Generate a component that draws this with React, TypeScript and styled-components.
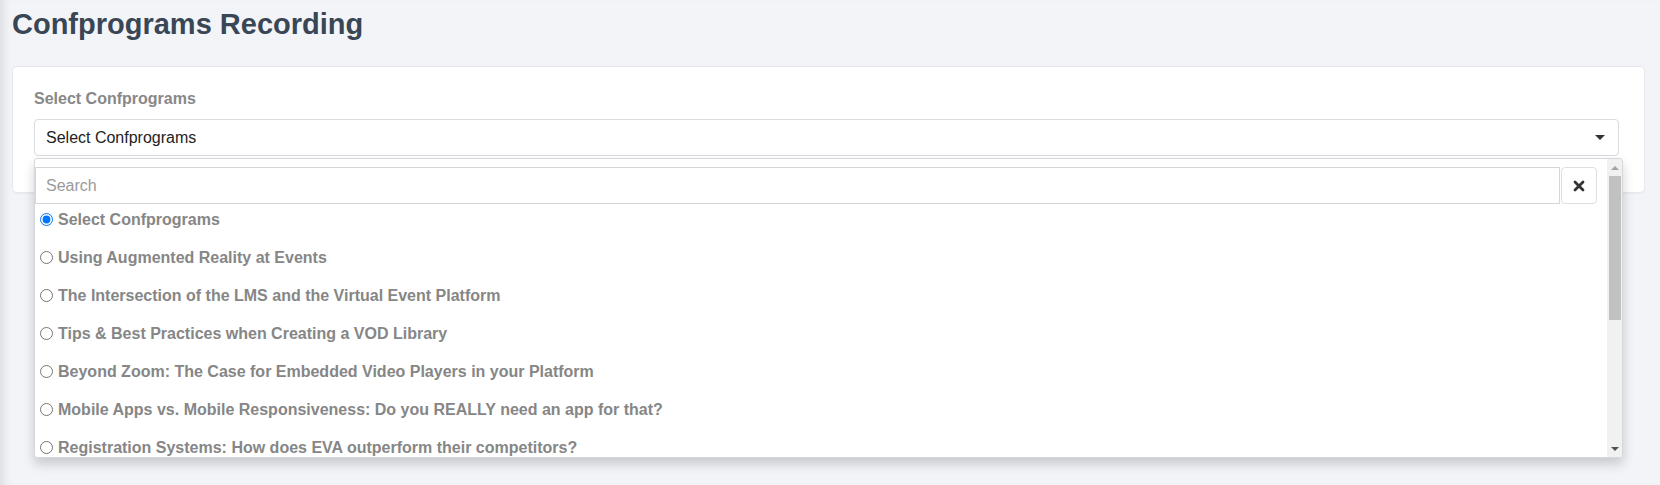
import React from "react"
import styled, { createGlobalStyle } from "styled-components"

const GlobalStyle = createGlobalStyle`
  html, body {
    margin: 0;
    padding: 0;
    background: #f3f4f8;
  }
  body {
    font-family: "Liberation Sans", Arial, sans-serif;
  }
`

const Page = styled.div`
  min-height: 485px;
  box-sizing: border-box;
  padding: 8px 15px 0 12px;
  background: #f3f4f8;
  box-shadow: inset 9px 0 8px -5px rgba(0, 0, 0, 0.09);
`

const Title = styled.h1`
  margin: 0;
  font-size: 29px;
  line-height: 33px;
  font-weight: 700;
  color: #394656;
`

const Card = styled.div`
  margin-top: 25px;
  box-sizing: border-box;
  height: 127px;
  padding: 23px 25px 0 21px;
  background: #fff;
  border: 1px solid #e6e8ec;
  border-radius: 5px;
  box-shadow: 0 1px 2px rgba(0, 0, 0, 0.04);
`

const Label = styled.label`
  display: block;
  font-size: 16px;
  line-height: 18px;
  font-weight: 700;
  color: #888;
`

const Field = styled.div`
  position: relative;
  margin-top: 11px;
`

const SelectBox = styled.div`
  display: flex;
  align-items: center;
  justify-content: space-between;
  box-sizing: border-box;
  height: 37px;
  padding: 0 12px 0 11px;
  border: 1px solid #d9dce0;
  border-radius: 4px;
  background: #fff;
  font-size: 16px;
  color: #222;
`

const Caret = styled.span`
  width: 0;
  height: 0;
  margin-right: 1px;
  border-left: 5px solid transparent;
  border-right: 5px solid transparent;
  border-top: 5px solid #333;
`

const Dropdown = styled.div`
  position: absolute;
  top: 39px;
  left: 0;
  right: -4px;
  height: 300px;
  box-sizing: border-box;
  display: flex;
  overflow: hidden;
  background: #fff;
  border: 1px solid #d6d8dc;
  border-radius: 3px;
  box-shadow: 0 6px 12px rgba(0, 0, 0, 0.18);
  z-index: 10;
`

const DropdownBody = styled.div`
  flex: 1;
  min-width: 0;
  overflow: hidden;
`

const Scrollbar = styled.div`
  display: flex;
  flex-direction: column;
  width: 15px;
  flex-shrink: 0;
  background: #f1f1f1;
`

const ScrollArrow = styled.div<{ $down?: boolean; $muted?: boolean }>`
  display: flex;
  align-items: center;
  justify-content: center;
  height: 17px;
  margin-top: ${(p) => (p.$down ? "auto" : "0")};
  &::after {
    content: "";
    width: 0;
    height: 0;
    border-left: 4px solid transparent;
    border-right: 4px solid transparent;
    ${(p) =>
      p.$down
        ? `border-top: 4px solid ${p.$muted ? "#a3a3a3" : "#505050"};`
        : `border-bottom: 4px solid ${p.$muted ? "#a3a3a3" : "#505050"};`}
  }
`

const ScrollThumb = styled.div`
  height: 144px;
  margin: 0 1px 0 2px;
  background: #c1c1c1;
`

const SearchRow = styled.div`
  display: flex;
  padding: 8px 10px 0 0;
`

const SearchInput = styled.input`
  flex: 1;
  box-sizing: border-box;
  height: 37px;
  margin: 0;
  padding: 0 10px;
  border: 1px solid #d3d7dc;
  border-radius: 0;
  font-family: "Liberation Sans", Arial, sans-serif;
  font-size: 16px;
  color: #333;
  outline: none;
  &::placeholder {
    color: #9a9a9a;
  }
`

const ClearButton = styled.button`
  display: flex;
  align-items: center;
  justify-content: center;
  width: 36px;
  height: 37px;
  margin: 0 0 0 1px;
  padding: 0;
  background: #fff;
  border: 1px solid #dcdfe3;
  border-radius: 4px;
  cursor: pointer;
`

const OptionList = styled.div`
  display: flex;
  flex-direction: column;
  gap: 7px;
`

const Option = styled.label`
  display: flex;
  align-items: center;
  height: 31px;
  padding-left: 5px;
  font-size: 16px;
  font-weight: 700;
  color: #868686;
  white-space: nowrap;
  cursor: pointer;
`

const Radio = styled.input`
  width: 13px;
  height: 13px;
  margin: 0 5px 0 0;
  flex-shrink: 0;
`

const options = [
  "Select Confprograms",
  "Using Augmented Reality at Events",
  "The Intersection of the LMS and the Virtual Event Platform",
  "Tips & Best Practices when Creating a VOD Library",
  "Beyond Zoom: The Case for Embedded Video Players in your Platform",
  "Mobile Apps vs. Mobile Responsiveness: Do you REALLY need an app for that?",
  "Registration Systems: How does EVA outperform their competitors?",
]

const CloseIcon = () => (
  <svg width="12" height="12" viewBox="0 0 12 12">
    <path
      d="M2 2 L10 10 M10 2 L2 10"
      stroke="#333"
      strokeWidth="2.8"
      strokeLinecap="round"
    />
  </svg>
)

export default function App() {
  const [selected, setSelected] = React.useState(0)
  const [query, setQuery] = React.useState("")

  return (
    <>
      <GlobalStyle />
      <Page>
        <Title>Confprograms Recording</Title>
        <Card>
          <Label>Select Confprograms</Label>
          <Field>
            <SelectBox>
              <span>{options[selected]}</span>
              <Caret />
            </SelectBox>
            <Dropdown>
              <DropdownBody>
                <SearchRow>
                  <SearchInput
                    placeholder="Search"
                    value={query}
                    onChange={(e) => setQuery(e.target.value)}
                  />
                  <ClearButton onClick={() => setQuery("")}>
                    <CloseIcon />
                  </ClearButton>
                </SearchRow>
                <OptionList>
                  {options
                    .filter((o) => o.toLowerCase().includes(query.toLowerCase()))
                    .map((o) => {
                      const index = options.indexOf(o)
                      return (
                        <Option key={o}>
                          <Radio
                            type="radio"
                            name="confprogram"
                            checked={selected === index}
                            onChange={() => setSelected(index)}
                          />
                          {o}
                        </Option>
                      )
                    })}
                </OptionList>
              </DropdownBody>
              <Scrollbar>
                <ScrollArrow $muted />
                <ScrollThumb />
                <ScrollArrow $down />
              </Scrollbar>
            </Dropdown>
          </Field>
        </Card>
      </Page>
    </>
  )
}
